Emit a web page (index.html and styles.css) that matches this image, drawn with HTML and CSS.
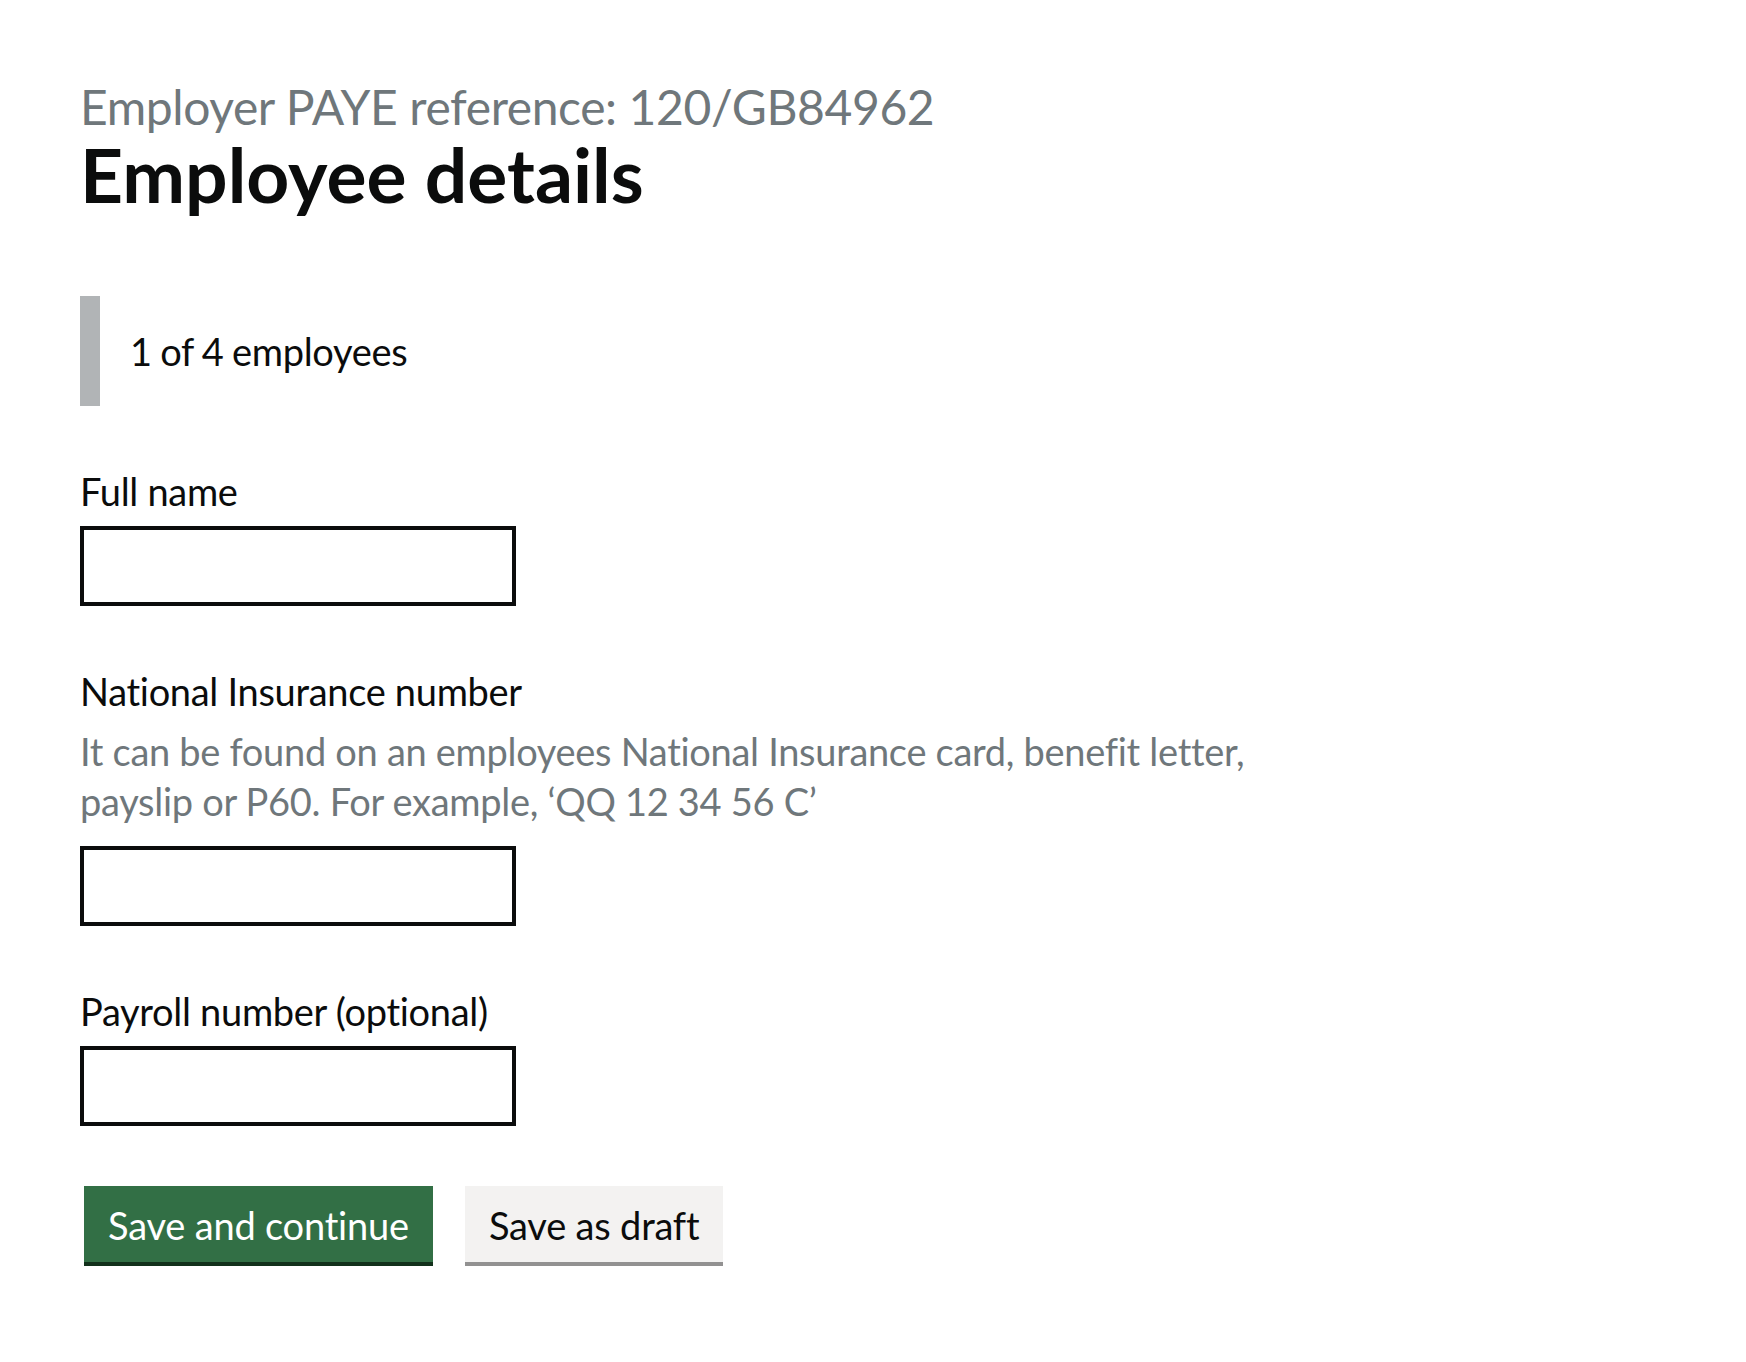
FILE: index.html
```html
<!DOCTYPE html>
<html lang="en">
<head>
<meta charset="utf-8">
<title>Employee details</title>
<link rel="stylesheet" href="styles.css">
</head>
<body>
<main class="page">
  <div class="column">
    <span class="caption">Employer PAYE reference: 120/GB84962</span>
    <h1 class="heading">Employee details</h1>

    <div class="inset">1 of 4 employees</div>

    <form class="form">
      <div class="form-group">
        <label class="label" for="full-name">Full name</label>
        <input class="input" id="full-name" type="text">
      </div>

      <div class="form-group">
        <label class="label" for="ni-number">National Insurance number</label>
        <div class="hint">It can be found on an employees National Insurance card, benefit letter, payslip or P60. For example, ‘QQ 12 34 56 C’</div>
        <input class="input" id="ni-number" type="text">
      </div>

      <div class="form-group">
        <label class="label" for="payroll">Payroll number (optional)</label>
        <input class="input" id="payroll" type="text">
      </div>

      <div class="button-group">
        <button class="btn btn-primary" type="button">Save and continue</button>
        <button class="btn btn-secondary" type="button">Save as draft</button>
      </div>
    </form>
  </div>
</main>
</body>
</html>
```

FILE: styles.css
```css
html, body {
  margin: 0;
  padding: 0;
  background: #ffffff;
}

body {
  font-family: Lato, "Liberation Sans", Arial, sans-serif;
  color: #0b0c0c;
  font-size: 38px;
  line-height: 50px;
  letter-spacing: -0.3px;
}

.page {
  padding: 82px 80px 80px 80px;
}

.column {
  width: 1200px;
}

.caption {
  display: block;
  font-size: 48px;
  line-height: 50px;
  letter-spacing: -0.4px;
  color: #6f777b;
  margin: 0;
}

.heading {
  font-size: 75px;
  line-height: 80px;
  font-weight: 700;
  letter-spacing: 0;
  margin: 2px 0 82px 0;
}

.inset {
  border-left: 20px solid #b1b4b6;
  padding: 30px;
  margin: 0 0 60px 0;
  word-spacing: -1px;
}

.form {
  margin: 0;
}

.form-group {
  margin-bottom: 60px;
}

.label {
  display: block;
  margin-bottom: 10px;
}

.hint {
  color: #6f777b;
  margin-bottom: 20px;
}

.input {
  display: block;
  box-sizing: border-box;
  width: 436px;
  height: 80px;
  margin: 0;
  padding: 0 10px;
  border: 4px solid #0b0c0c;
  border-radius: 0;
  font: inherit;
  background: #ffffff;
}

.button-group {
  display: flex;
  gap: 32px;
  padding-left: 4px;
}

.btn {
  font-family: inherit;
  font-size: 38px;
  line-height: 38px;
  letter-spacing: -0.2px;
  padding: 16px 20px 14px 20px;
  border: 4px solid transparent;
  border-radius: 0;
  margin: 0;
  cursor: pointer;
}

.btn-primary {
  background: #326f45;
  color: #ffffff;
  box-shadow: 0 4px 0 #12301b;
}

.btn-secondary {
  background: #f3f2f1;
  color: #0b0c0c;
  box-shadow: 0 4px 0 #929191;
}
```
